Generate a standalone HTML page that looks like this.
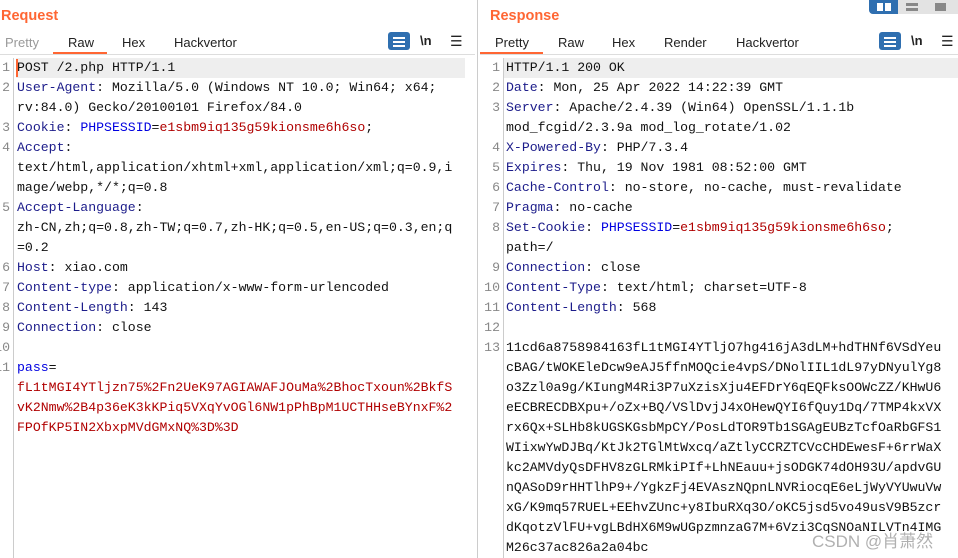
<!DOCTYPE html>
<html><head><meta charset="utf-8"><style>
*{margin:0;padding:0;box-sizing:border-box}
body{width:958px;height:558px;background:#fff;position:relative;overflow:hidden;font-family:"Liberation Sans",sans-serif}
.title{position:absolute;top:8px;font-size:14.5px;font-weight:bold;color:#ff6633}
.tab{position:absolute;top:35px;font-size:13px;color:#222}
.ul{position:absolute;top:52px;height:2px;background:#ff6633}
.hline{position:absolute;top:54px;height:1px;background:#ddd}
.code{position:absolute;font-family:"Liberation Mono",monospace;font-size:13.2px;line-height:20px;white-space:pre;color:#111}
.ln{position:absolute;font-family:"Liberation Mono",monospace;font-size:13.2px;line-height:20px;color:#888;text-align:right;white-space:pre}
.k{color:#1c1c8a}.b{color:#0000e0}.r{color:#b00000}
.gut{position:absolute;top:58px;bottom:0;width:1px;background:#ccc}
.wrap{position:absolute;width:22px;height:18px;background:#2f6fb0;border-radius:3px;top:32px}
.wrap:after{content:"";position:absolute;left:5px;top:5px;width:12px;height:2px;background:#fff;box-shadow:0 4px 0 #fff,0 8px 0 #fff}
.nl{position:absolute;top:33px;font-size:13px;font-weight:bold;color:#222}
.menu{position:absolute;top:33px;font-size:14px;color:#222}
</style></head><body>
<div style="position:absolute;left:869px;top:0;width:89px;height:14px;background:#e3e3e3;border-radius:0 0 0 4px"></div>
<div style="position:absolute;left:869px;top:0;width:29px;height:14px;background:#2f6fb0;border-radius:0 0 0 4px"></div>
<div style="position:absolute;left:877px;top:3px;width:6px;height:8px;background:#fff"></div>
<div style="position:absolute;left:885px;top:3px;width:6px;height:8px;background:#fff"></div>
<div style="position:absolute;left:906px;top:3px;width:12px;height:3px;background:#888"></div>
<div style="position:absolute;left:906px;top:8px;width:12px;height:3px;background:#888"></div>
<div style="position:absolute;left:935px;top:3px;width:11px;height:8px;background:#888"></div>

<div style="position:absolute;left:477px;top:0;width:1px;height:558px;background:#ccc"></div>

<div class="title" style="left:1px">Request</div>
<div class="tab" style="left:5px;color:#999">Pretty</div>
<div class="tab" style="left:68px">Raw</div>
<div class="tab" style="left:122px">Hex</div>
<div class="tab" style="left:174px">Hackvertor</div>
<div class="ul" style="left:53px;width:54px"></div>
<div class="hline" style="left:0;width:475px"></div>
<div class="wrap" style="left:388px"></div>
<div class="nl" style="left:420px">\n</div>
<div class="menu" style="left:450px">☰</div>
<div style="position:absolute;left:16px;top:58px;width:449px;height:20px;background:#eee"></div>
<div style="position:absolute;left:16px;top:59px;width:2px;height:18px;background:#ff6633"></div>
<div class="gut" style="left:13px"></div>
<div class="ln" style="left:-10px;top:58px;width:20px">1
2

3
4


5


6
7
8
9
10
11</div>
<div class="code" style="left:17px;top:58px">POST /2.php HTTP/1.1
<span class="k">User-Agent</span>: Mozilla/5.0 (Windows NT 10.0; Win64; x64;
rv:84.0) Gecko/20100101 Firefox/84.0
<span class="k">Cookie</span>: <span class="b">PHPSESSID</span>=<span class="r">e1sbm9iq135g59kionsme6h6so</span>;
<span class="k">Accept</span>:
text/html,application/xhtml+xml,application/xml;q=0.9,i
mage/webp,*/*;q=0.8
<span class="k">Accept-Language</span>:
zh-CN,zh;q=0.8,zh-TW;q=0.7,zh-HK;q=0.5,en-US;q=0.3,en;q
=0.2
<span class="k">Host</span>: xiao.com
<span class="k">Content-type</span>: application/x-www-form-urlencoded
<span class="k">Content-Length</span>: 143
<span class="k">Connection</span>: close

<span class="b">pass</span>=
<span class="r">fL1tMGI4YTljzn75%2Fn2UeK97AGIAWAFJOuMa%2BhocTxoun%2BkfS
vK2Nmw%2B4p36eK3kKPiq5VXqYvOGl6NW1pPhBpM1UCTHHseBYnxF%2
FPOfKP5IN2XbxpMVdGMxNQ%3D%3D</span></div>

<div class="title" style="left:490px">Response</div>
<div class="tab" style="left:495px">Pretty</div>
<div class="tab" style="left:558px">Raw</div>
<div class="tab" style="left:612px">Hex</div>
<div class="tab" style="left:664px">Render</div>
<div class="tab" style="left:736px">Hackvertor</div>
<div class="ul" style="left:480px;width:63px"></div>
<div class="hline" style="left:480px;width:478px"></div>
<div class="wrap" style="left:879px"></div>
<div class="nl" style="left:911px">\n</div>
<div class="menu" style="left:941px">☰</div>
<div style="position:absolute;left:504px;top:58px;width:454px;height:20px;background:#eee"></div>
<div class="gut" style="left:503px"></div>
<div class="ln" style="left:480px;top:58px;width:20px">1
2
3

4
5
6
7
8

9
10
11
12
13</div>
<div class="code" style="left:506px;top:58px">HTTP/1.1 200 OK
<span class="k">Date</span>: Mon, 25 Apr 2022 14:22:39 GMT
<span class="k">Server</span>: Apache/2.4.39 (Win64) OpenSSL/1.1.1b
mod_fcgid/2.3.9a mod_log_rotate/1.02
<span class="k">X-Powered-By</span>: PHP/7.3.4
<span class="k">Expires</span>: Thu, 19 Nov 1981 08:52:00 GMT
<span class="k">Cache-Control</span>: no-store, no-cache, must-revalidate
<span class="k">Pragma</span>: no-cache
<span class="k">Set-Cookie</span>: <span class="b">PHPSESSID</span>=<span class="r">e1sbm9iq135g59kionsme6h6so</span>;
path=/
<span class="k">Connection</span>: close
<span class="k">Content-Type</span>: text/html; charset=UTF-8
<span class="k">Content-Length</span>: 568

11cd6a8758984163fL1tMGI4YTljO7hg416jA3dLM+hdTHNf6VSdYeu
cBAG/tWOKEleDcw9eAJ5ffnMOQcie4vpS/DNolIIL1dL97yDNyulYg8
o3Zzl0a9g/KIungM4Ri3P7uXzisXju4EFDrY6qEQFksOOWcZZ/KHwU6
eECBRECDBXpu+/oZx+BQ/VSlDvjJ4xOHewQYI6fQuy1Dq/7TMP4kxVX
rx6Qx+SLHb8kUGSKGsbMpCY/PosLdTOR9Tb1SGAgEUBzTcfOaRbGFS1
WIixwYwDJBq/KtJk2TGlMtWxcq/aZtlyCCRZTCVcCHDEwesF+6rrWaX
kc2AMVdyQsDFHV8zGLRMkiPIf+LhNEauu+jsODGK74dOH93U/apdvGU
nQASoD9rHHTlhP9+/YgkzFj4EVAszNQpnLNVRiocqE6eLjWyVYUwuVw
xG/K9mq57RUEL+EEhvZUnc+y8IbuRXq3O/oKC5jsd5vo49usV9B5zcr
dKqotzVlFU+vgLBdHX6M9wUGpzmnzaG7M+6Vzi3CqSNOaNILVTn4IMG
M26c37ac826a2a04bc</div>
<div style="position:absolute;left:812px;top:527px;font-size:17px;color:rgba(150,150,150,0.75);font-family:'Liberation Sans','Noto Sans CJK SC',sans-serif">CSDN @肖萧然</div>
</body></html>
